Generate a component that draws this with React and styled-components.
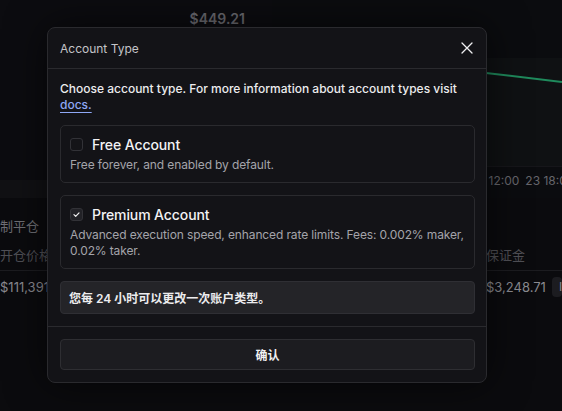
import React from 'react'
import styled, { createGlobalStyle } from 'styled-components'

const Global = createGlobalStyle`
  html, body {
    margin: 0;
    padding: 0;
    background: #0b0b0e;
    font-family: Inter, "Noto Sans CJK SC", sans-serif;
  }
  * { box-sizing: border-box; }
`

const Page = styled.div`
  position: relative;
  width: 562px;
  height: 411px;
  overflow: hidden;
  background: #0b0b0e;
  color: #6e6e74;
`

const TopArea = styled.div`
  display: grid;
  grid-template-columns: 272px 1fr;
  height: 198px;
`

const LeftPane = styled.div`
  display: flex;
  flex-direction: column;
`

const PricePanel = styled.div`
  height: 180px;
  background: #0c0c10;
  display: flex;
  justify-content: flex-end;
  padding: 10px 27px 0 0;
`

const Price = styled.div`
  font-size: 14px;
  font-weight: 600;
  color: #6a6a70;
`

const Band = styled.div`
  flex: 1;
  background: #111114;
`

const ChartPane = styled.div`
  display: flex;
  flex-direction: column;
  background: #0b0c0f;
`

const Chart = styled.div`
  height: 167px;
  background: linear-gradient(180deg, #0b0c0f 0 58px, #0f1113 58px);
  border-bottom: 1px solid #16161a;
`

const TimeAxis = styled.div`
  height: 26px;
  display: flex;
  gap: 6px;
  align-items: center;
  padding-left: 101px;
  font-size: 12px;
  color: #66666c;
  white-space: nowrap;
  overflow: hidden;
`

const Table = styled.div`
  display: flex;
  justify-content: space-between;
  padding-top: 13px;
`

const Column = styled.div`
  display: flex;
  flex-direction: column;
  width: ${(p) => p.$width}px;
`

const Cell = styled.div`
  height: ${(p) => p.$h}px;
  display: flex;
  align-items: center;
  gap: 6px;
  font-size: 13px;
  color: ${(p) => (p.$value ? '#8a8a90' : p.$dim ? '#505056' : '#6e6e74')};
  white-space: nowrap;
  border-bottom: ${(p) => (p.$line ? '1px solid #1c1c20' : 'none')};
`

const TinyButton = styled.span`
  display: inline-block;
  width: 22px;
  height: 20px;
  border-radius: 4px;
  background: #1c1c20;
  color: #8a8a90;
  font-size: 12px;
  padding-left: 7px;
  line-height: 20px;
`

const Dialog = styled.div`
  position: absolute;
  left: 47px;
  top: 27px;
  width: 440px;
  background: #131317;
  border: 1px solid #2a2a2e;
  border-radius: 8px;
  box-shadow: 0 0 40px rgba(0, 0, 0, 0.6);
  display: flex;
  flex-direction: column;
`

const Header = styled.div`
  height: 41px;
  display: flex;
  align-items: center;
  justify-content: space-between;
  padding: 0 13px 0 12px;
  border-bottom: 1px solid #2a2a2e;
`

const Title = styled.div`
  font-size: 12px;
  color: #c4c4c8;
`

const Close = styled.button`
  background: none;
  border: none;
  padding: 0;
  display: flex;
  color: #f0f0f2;
  cursor: pointer;
`

const Body = styled.div`
  display: flex;
  flex-direction: column;
  gap: 12px;
  padding: 12px 11px 12px 12px;
  border-bottom: 1px solid #2a2a2e;
`

const Intro = styled.p`
  margin: 0;
  max-width: 400px;
  font-size: 12px;
  line-height: 16px;
  font-weight: 500;
  color: #ececee;
`

const DocLink = styled.a`
  color: #8fa8f5;
  text-decoration: underline;
  text-underline-offset: 3px;
`

const Card = styled.div`
  border: 1px solid #2a2a2e;
  border-radius: 5px;
  padding: 8px 9px 9px;
  display: flex;
  flex-direction: column;
  gap: 3px;
`

const CardHead = styled.div`
  height: 20px;
  display: flex;
  align-items: center;
  gap: 9px;
`

const Box = styled.span`
  width: 13px;
  height: 13px;
  border-radius: 3px;
  border: 1px solid #323237;
  background: ${(p) => (p.$checked ? '#222227' : '#141418')};
  display: flex;
  align-items: center;
  justify-content: center;
`

const CardTitle = styled.div`
  font-size: 14px;
  letter-spacing: -0.1px;
  font-weight: 500;
  color: #f2f2f4;
`

const CardText = styled.div`
  font-size: 12px;
  letter-spacing: -0.12px;
  line-height: 16px;
  color: #a4a4aa;
`

const Note = styled.div`
  background: #242428;
  border: 1px solid #2f2f34;
  border-radius: 4px;
  height: 33px;
  display: flex;
  align-items: center;
  padding: 0 8px;
  font-size: 12px;
  font-weight: 600;
  color: #ececee;
`

const Footer = styled.div`
  padding: 12px 11px 12px 12px;
`

const Confirm = styled.button`
  width: 100%;
  height: 31px;
  background: #1c1c20;
  border: 1px solid #2e2e32;
  border-radius: 4px;
  color: #f0f0f2;
  font-family: inherit;
  font-size: 12px;
  font-weight: 700;
  cursor: pointer;
`

function Checkbox({ checked }) {
  return (
    <Box $checked={checked}>
      {checked && (
        <svg width="9" height="9" viewBox="0 0 10 10" fill="none">
          <path d="M2.2 5.2l1.9 1.9L7.8 3.2" stroke="#f0f0f2" strokeWidth="1.3" strokeLinecap="round" strokeLinejoin="round" />
        </svg>
      )}
    </Box>
  )
}

const accounts = [
  { name: 'Free Account', text: 'Free forever, and enabled by default.', checked: false },
  {
    name: 'Premium Account',
    text: 'Advanced execution speed, enhanced rate limits. Fees: 0.002% maker, 0.02% taker.',
    checked: true,
  },
]

export default function App() {
  return (
    <Page>
      <Global />
      <TopArea>
        <LeftPane>
          <PricePanel>
            <Price>$449.21</Price>
          </PricePanel>
          <Band />
        </LeftPane>
        <ChartPane>
          <Chart>
            <svg width="290" height="167">
              <path d="M214 73 L290 82" stroke="#1f8a5c" strokeWidth="2" fill="none" />
            </svg>
          </Chart>
          <TimeAxis>
            <span>23 00:00</span>
            <span>23 06:00</span>
            <span>12:00</span>
            <span>23 18:00</span>
          </TimeAxis>
        </ChartPane>
      </TopArea>
      <Table>
        <Column $width={140}>
          <Cell $h={28}>制平仓</Cell>
          <Cell $h={32} $line $dim>开仓价格</Cell>
          <Cell $h={32} $value>$111,391.9</Cell>
        </Column>
        <Column $width={76}>
          <Cell $h={28} />
          <Cell $h={32} $line $dim>保证金</Cell>
          <Cell $h={32} $value>
            $3,248.71 <TinyButton>I</TinyButton>
          </Cell>
        </Column>
      </Table>

      <Dialog role="dialog">
        <Header>
          <Title>Account Type</Title>
          <Close aria-label="Close">
            <svg width="12" height="12" viewBox="0 0 12 12" fill="none">
              <path d="M1 1l10 10M11 1L1 11" stroke="currentColor" strokeWidth="1.3" strokeLinecap="round" />
            </svg>
          </Close>
        </Header>
        <Body>
          <Intro>
            Choose account type. For more information about account types visit <DocLink>docs.</DocLink>
          </Intro>
          {accounts.map((a) => (
            <Card key={a.name}>
              <CardHead>
                <Checkbox checked={a.checked} />
                <CardTitle>{a.name}</CardTitle>
              </CardHead>
              <CardText>{a.text}</CardText>
            </Card>
          ))}
          <Note>您每 24 小时可以更改一次账户类型。</Note>
        </Body>
        <Footer>
          <Confirm>确认</Confirm>
        </Footer>
      </Dialog>
    </Page>
  )
}
